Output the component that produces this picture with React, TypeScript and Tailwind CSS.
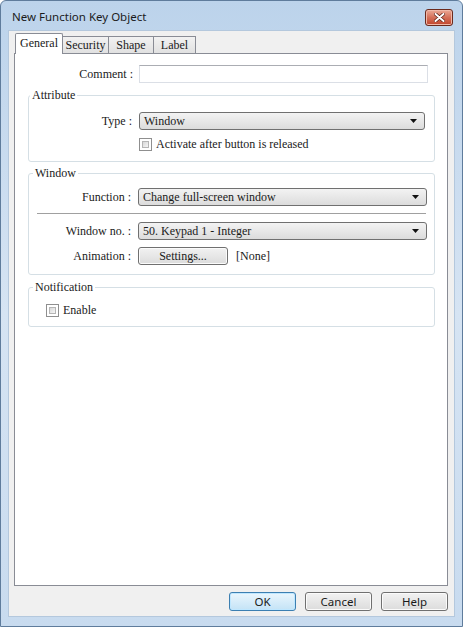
import React from 'react'

function Combo({ value, className = '' }: { value: string; className?: string }) {
  return (
    <div className={`flex items-center h-[18px] border border-[#707070] rounded-[3px] bg-linear-to-b from-[#f3f3f3] to-[#dcdcdc] pl-[4px] pr-[7px] ${className}`}>
      <span className="flex-1 leading-none whitespace-nowrap">{value}</span>
      <svg width="7" height="4" viewBox="0 0 7 4">
        <path d="M0 0h7L3.5 4z" fill="#111" />
      </svg>
    </div>
  )
}

function Check() {
  return (
    <div className="w-[13px] h-[13px] border border-[#8f8f8f] bg-white p-[2px] shrink-0">
      <div className="w-full h-full border border-[#b5b5b5] bg-linear-to-br from-[#d8d8d8] to-[#f6f6f6]" />
    </div>
  )
}

function Tab({ label, active = false, w }: { label: string; active?: boolean; w: string }) {
  if (active) {
    return (
      <div className={`relative z-10 -mb-px h-[21px] ${w} flex items-center justify-center bg-white border border-b-0 border-[#898c95] rounded-t-[2px] pb-[2px]`}>
        {label}
      </div>
    )
  }
  return (
    <div className={`h-[17px] ${w} flex items-center justify-center bg-linear-to-b from-[#f2f2f2] to-[#e1e1e1] border border-l-0 border-b-0 border-[#898c95]`}>
      {label}
    </div>
  )
}

function WinButton({ label, primary = false }: { label: string; primary?: boolean }) {
  return (
    <button
      className={`w-[67px] h-[19px] rounded-[3px] border text-[11.5px] leading-none text-[#1a1a1a] [font-family:'Noto_Sans',sans-serif] ${
        primary
          ? 'border-[#3c7fb1] bg-linear-to-b from-[#eaf6fd] to-[#c4e3f6] shadow-[inset_0_0_0_1px_#bfe7ff]'
          : 'border-[#707070] bg-linear-to-b from-[#f2f2f2] to-[#dcdcdc] shadow-[inset_0_0_0_1px_#fbfbfb]'
      }`}
    >
      {label}
    </button>
  )
}

export default function App() {
  return (
    <div className="w-[463px] h-[627px] flex flex-col border border-[#5f7c9c] rounded-t-[6px] bg-linear-to-b from-[#bcd3eb] via-[#d6e4f3] to-[#c8dbef]">
      {/* title bar */}
      <div className="h-[29px] flex items-center justify-between pl-[11px] pr-[9px]">
        <span className="text-[11.5px] text-[#1b1b1b] [font-family:'Noto_Sans',sans-serif] mt-[2px]">New Function Key Object</span>
        <div className="w-[28px] h-[17px] mt-[3px] rounded-[3px] border border-[#6b2a1d] bg-linear-to-b from-[#eaa896] via-[#d46f58] to-[#c0432c] flex items-center justify-center shadow-[inset_0_0_0_1px_#f0b8a8]">
          <svg width="11" height="9" viewBox="0 0 11 9">
            <path d="M1.5 1l8 7M9.5 1l-8 7" stroke="#5a1e14" strokeWidth="3.4" strokeLinecap="round" />
            <path d="M1.5 1l8 7M9.5 1l-8 7" stroke="#fff" strokeWidth="2" strokeLinecap="round" />
          </svg>
        </div>
      </div>

      {/* client area */}
      <div className="flex-1 mx-[7px] mb-[9px] flex flex-col bg-[#f0f0f0] border border-[#b4c8dd] pt-[2px] pl-[5px] pr-[6px] pb-[5px]">
        <div className="flex flex-col flex-1 [font-family:'Liberation_Serif',serif] text-[12px] text-[#1a1a1a]">
          <div className="flex items-end h-[20px] pl-[1px]">
            <Tab label="General" active w="w-[48px]" />
            <Tab label="Security" w="w-[46px]" />
            <Tab label="Shape" w="w-[45px]" />
            <Tab label="Label" w="w-[42px]" />
          </div>

          <div className="flex-1 bg-white border border-[#898c95] flex flex-col">
            {/* comment */}
            <div className="flex items-center mt-[11px] h-[18px]">
              <span className="w-[118px] text-right">Comment :</span>
              <div className="ml-[6px] w-[289px] h-[18px] border border-[#dbdfe6] border-t-[#abadb3]" />
            </div>

            {/* attribute */}
            <fieldset className="mt-[5px] ml-[13px] mr-[12px] border border-[#d5dfe5] rounded-[3px] pb-[10px]">
              <legend className="ml-[1px] px-[2px] leading-[14px]">Attribute</legend>
              <div className="flex items-center mt-[10px]">
                <span className="w-[103px] text-right">Type :</span>
                <Combo value="Window" className="ml-[7px] w-[286px]" />
              </div>
              <div className="flex items-center mt-[8px] ml-[110px] gap-[4px]">
                <Check />
                <span className="leading-[13px]">Activate after button is released</span>
              </div>
            </fieldset>

            {/* window */}
            <fieldset className="mt-[4px] ml-[13px] mr-[12px] border border-[#d5dfe5] rounded-[3px] pb-[9px]">
              <legend className="ml-[4px] px-[2px] leading-[14px]">Window</legend>
              <div className="flex items-center mt-[8px]">
                <span className="w-[102px] text-right">Function :</span>
                <Combo value="Change full-screen window" className="ml-[7px] w-[289px]" />
              </div>
              <div className="mt-[7px] ml-[8px] mr-[8px] h-px bg-[#a0a0a0] border-b border-white box-content" />
              <div className="flex items-center mt-[7px]">
                <span className="w-[102px] text-right">Window no. :</span>
                <Combo value="50. Keypad 1 - Integer" className="ml-[7px] w-[289px]" />
              </div>
              <div className="flex items-center mt-[7px]">
                <span className="w-[102px] text-right">Animation :</span>
                <button className="ml-[7px] w-[90px] h-[18px] rounded-[3px] border border-[#707070] bg-linear-to-b from-[#f2f2f2] to-[#dcdcdc] shadow-[inset_0_0_0_1px_#fbfbfb] leading-none">
                  Settings...
                </button>
                <span className="ml-[8px]">[None]</span>
              </div>
            </fieldset>

            {/* notification */}
            <fieldset className="mt-[5px] ml-[13px] mr-[12px] border border-[#d5dfe5] rounded-[3px] pb-[9px]">
              <legend className="ml-[4px] px-[2px] leading-[14px]">Notification</legend>
              <div className="flex items-center mt-[10px] ml-[17px] gap-[4px]">
                <Check />
                <span className="leading-[13px]">Enable</span>
              </div>
            </fieldset>
          </div>
        </div>

        <div className="flex justify-end gap-[9px] mt-[6px]">
          <WinButton label="OK" primary />
          <WinButton label="Cancel" />
          <WinButton label="Help" />
        </div>
      </div>
    </div>
  )
}
